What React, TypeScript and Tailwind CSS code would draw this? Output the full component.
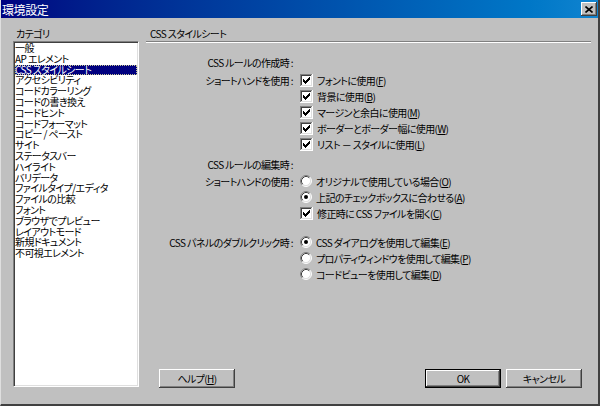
import React from 'react'

const categories = [
  '一般',
  'AP エレメント',
  'CSS スタイルシート',
  'アクセシビリティ',
  'コードカラーリング',
  'コードの書き換え',
  'コードヒント',
  'コードフォーマット',
  'コピー / ペースト',
  'サイト',
  'ステータスバー',
  'ハイライト',
  'バリデータ',
  'ファイルタイプ/エディタ',
  'ファイルの比較',
  'フォント',
  'ブラウザでプレビュー',
  'レイアウトモード',
  '新規ドキュメント',
  '不可視エレメント',
]

// classic 7x7 check mark, start row of each 3px column
const checkCols = [2, 3, 4, 3, 2, 1, 0]

function CheckBox() {
  return (
    <svg width="13" height="13" className="shrink-0">
      <rect x="0" y="0" width="13" height="13" fill="#ffffff" />
      <rect x="0" y="0" width="12" height="1" fill="#808080" />
      <rect x="0" y="0" width="1" height="12" fill="#808080" />
      <rect x="1" y="1" width="10" height="1" fill="#404040" />
      <rect x="1" y="1" width="1" height="10" fill="#404040" />
      <rect x="1" y="11" width="11" height="1" fill="#dfdfdf" />
      <rect x="11" y="1" width="1" height="11" fill="#dfdfdf" />
      {checkCols.map((s, i) => (
        <rect key={i} x={3 + i} y={3 + s} width="1" height="3" fill="#000000" />
      ))}
    </svg>
  )
}

function Radio({ checked }: { checked?: boolean }) {
  return (
    <svg width="12" height="12" className="shrink-0">
      <circle cx="6" cy="6" r="5" fill="#ffffff" />
      <path d="M2.11 9.89 A5.5 5.5 0 0 1 9.89 2.11" fill="none" stroke="#808080" strokeWidth="1" />
      <path d="M9.89 2.11 A5.5 5.5 0 0 1 2.11 9.89" fill="none" stroke="#ffffff" strokeWidth="1" />
      <path d="M2.82 9.18 A4.5 4.5 0 0 1 9.18 2.82" fill="none" stroke="#404040" strokeWidth="1" />
      <path d="M9.18 2.82 A4.5 4.5 0 0 1 2.82 9.18" fill="none" stroke="#dfdfdf" strokeWidth="1" />
      {checked && <circle cx="6" cy="6" r="2" fill="#000000" />}
    </svg>
  )
}

function Mn({ children }: { children: React.ReactNode }) {
  return <span className="underline underline-offset-1">{children}</span>
}

function Row({
  label,
  className = '',
  children,
}: {
  label?: string
  className?: string
  children?: React.ReactNode
}) {
  return (
    <div className={`flex items-center h-[16px] ${className}`}>
      <div className="w-[147px] text-right whitespace-nowrap">{label}</div>
      <div className="pl-[7px] flex items-center gap-[4px] whitespace-nowrap">{children}</div>
    </div>
  )
}

function Button({
  children,
  isDefault,
}: {
  children: React.ReactNode
  isDefault?: boolean
}) {
  return (
    <button
      className={`w-[76px] h-[19px] bg-[#c0c0c0] flex items-center justify-center ${
        isDefault
          ? 'border border-black shadow-[inset_-1px_-1px_#404040,inset_1px_1px_#ffffff,inset_-2px_-2px_#808080]'
          : 'shadow-[inset_-1px_-1px_#404040,inset_1px_1px_#ffffff,inset_-2px_-2px_#808080]'
      }`}
    >
      {children}
    </button>
  )
}

export default function App() {
  return (
    <div
      className="w-[600px] h-[406px] bg-[#c0c0c0] flex flex-col text-[10px] leading-[13px] tracking-[-0.6px] text-black overflow-hidden border-l border-l-[#dfdfdf] border-r-2 border-r-[#404040] border-b-2 border-b-[#404040] [font-feature-settings:'palt']"
      style={{ fontFamily: '"Noto Sans CJK JP", sans-serif' }}
    >
      {/* title bar */}
      <div className="h-[18px] shrink-0 flex items-center justify-between bg-gradient-to-r from-[#000080] to-[#1084d0] pl-[2px] pr-[1px] -ml-px">
        <span className="text-white text-[12px] tracking-[-0.4px]">環境設定</span>
        <div className="w-[16px] h-[14px] bg-[#c0c0c0] flex items-center justify-center shadow-[inset_-1px_-1px_#404040,inset_1px_1px_#ffffff,inset_-2px_-2px_#808080]">
          <svg width="8" height="7" viewBox="0 0 8 7">
            <path d="M0.5 0.5 L7.5 6.5 M7.5 0.5 L0.5 6.5" stroke="#000" strokeWidth="1.6" />
          </svg>
        </div>
      </div>

      <div className="flex flex-1 pt-[8px]">
        {/* categories */}
        <div className="w-[145px] pl-[12px] flex flex-col">
          <div className="h-[15px] pl-[3px] flex items-center">カテゴリ</div>
          <div className="w-[126px] h-[346px] bg-white border border-t-[#808080] border-l-[#808080] border-r-white border-b-white shadow-[inset_1px_1px_#404040,inset_-1px_-1px_#dfdfdf] p-px">
            {categories.map((c, i) => (
              <div
                key={c}
                className={`h-[10.8px] leading-[10.8px] whitespace-nowrap ${
                  i === 2
                    ? 'bg-[#000080] text-white outline-1 outline-dotted -outline-offset-1 outline-[#c8c890]'
                    : ''
                }`}
              >
                {c}
              </div>
            ))}
          </div>
        </div>

        {/* settings */}
        <div className="flex-1 flex flex-col">
          <div className="h-[15px] pl-[4px] flex items-center">CSS スタイルシート</div>
          <div className="w-[445px] border-t border-t-[#808080] border-b border-b-white" />

          <div className="mt-[11px] flex flex-col">
            <Row label="CSS ルールの作成時 :" />
            <Row label="ショートハンドを使用 :" className="mt-[2px]">
              <CheckBox />
              <span>
                フォントに使用(<Mn>F</Mn>)
              </span>
            </Row>
            <Row>
              <CheckBox />
              <span>
                背景に使用(<Mn>B</Mn>)
              </span>
            </Row>
            <Row>
              <CheckBox />
              <span>
                マージンと余白に使用(<Mn>M</Mn>)
              </span>
            </Row>
            <Row>
              <CheckBox />
              <span>
                ボーダーとボーダー幅に使用(<Mn>W</Mn>)
              </span>
            </Row>
            <Row>
              <CheckBox />
              <span>
                リスト  －  スタイルに使用(<Mn>L</Mn>)
              </span>
            </Row>

            <Row label="CSS ルールの編集時 :" className="mt-[4px]" />
            <Row label="ショートハンドの使用 :" className="mt-px">
              <Radio />
              <span>
                オリジナルで使用している場合(<Mn>O</Mn>)
              </span>
            </Row>
            <Row>
              <Radio checked />
              <span>
                上記のチェックボックスに合わせる(<Mn>A</Mn>)
              </span>
            </Row>
            <Row>
              <CheckBox />
              <span>
                修正時に CSS ファイルを開く(<Mn>C</Mn>)
              </span>
            </Row>

            <Row label="CSS パネルのダブルクリック時 :" className="mt-[13px]">
              <Radio checked />
              <span>
                CSS ダイアログを使用して編集(<Mn>E</Mn>)
              </span>
            </Row>
            <Row>
              <Radio />
              <span>
                プロパティウィンドウを使用して編集(<Mn>P</Mn>)
              </span>
            </Row>
            <Row>
              <Radio />
              <span>
                コードビューを使用して編集(<Mn>D</Mn>)
              </span>
            </Row>
          </div>

          <div className="mt-auto mb-[16px] flex items-center pl-[13px] pr-[16px]">
            <Button>
              ヘルプ(<Mn>H</Mn>)
            </Button>
            <div className="flex-1" />
            <Button isDefault>OK</Button>
            <div className="w-[5px]" />
            <Button>キャンセル</Button>
          </div>
        </div>
      </div>
    </div>
  )
}
